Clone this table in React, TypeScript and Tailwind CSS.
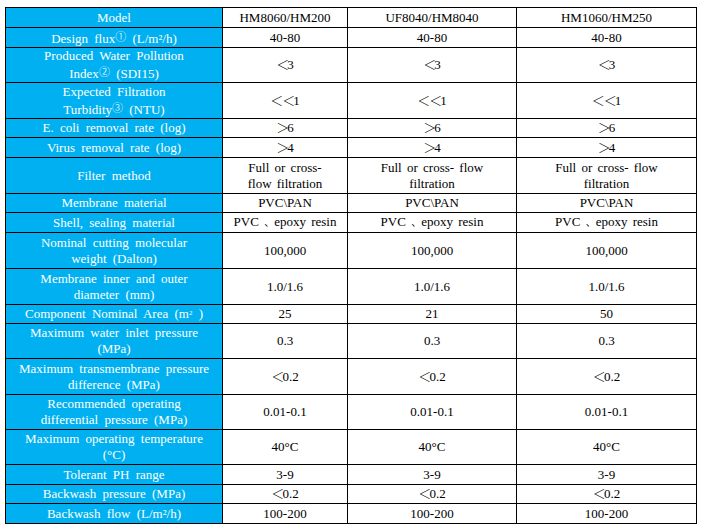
import React from 'react';

// spec table for the hollow fibre membrane modules
type Row = { label: React.ReactNode; values: React.ReactNode[]; h: string };

const Circ = ({ c }: { c: string }) => <span className="text-[11px] align-[2px] font-light">{c}</span>;

// full-width comparison sign, squeezed so it sits against the digit
const Sym = ({ c }: { c: string }) => <span className="tracking-[-2px] font-light">{c}</span>;

const same = (v: React.ReactNode) => [v, v, v];

const lt = (n: string) => (
  <>
    <Sym c="＜" />
    {n}
  </>
);
const gt = (n: string) => (
  <>
    <Sym c="＞" />
    {n}
  </>
);

const rows: Row[] = [
  {
    label: (
      <>
        Design flux<Circ c="①" /> (L/m²/h)
      </>
    ),
    values: same('40-80'),
    h: 'h-[20px]',
  },
  {
    label: (
      <>
        Produced Water Pollution
        <br />
        Index<Circ c="②" /> (SDI15)
      </>
    ),
    values: same(lt('3')),
    h: 'h-[35px]',
  },
  {
    label: (
      <>
        Expected Filtration
        <br />
        Turbidity<Circ c="③" /> (NTU)
      </>
    ),
    values: same(
      <>
        <span className="tracking-[-1px] font-light">＜</span>
        <Sym c="＜" />1
      </>
    ),
    h: 'h-[36px]',
  },
  { label: 'E. coli removal rate (log)', values: same(gt('6')), h: 'h-[19px]' },
  { label: 'Virus removal rate (log)', values: same(gt('4')), h: 'h-[20px]' },
  {
    label: 'Filter method',
    values: [
      <>
        Full or cross-
        <br />
        flow filtration
      </>,
      <>
        Full or cross- flow
        <br />
        filtration
      </>,
      <>
        Full or cross- flow
        <br />
        filtration
      </>,
    ],
    h: 'h-[36px]',
  },
  { label: 'Membrane material', values: same('PVC\\PAN'), h: 'h-[19px]' },
  {
    label: 'Shell, sealing material',
    values: same(
      <>
        PVC <span className="text-[10px]">、</span>epoxy resin
      </>
    ),
    h: 'h-[20px]',
  },
  {
    label: (
      <>
        Nominal cutting molecular
        <br />
        weight (Dalton)
      </>
    ),
    values: same('100,000'),
    h: 'h-[36px]',
  },
  {
    label: (
      <>
        Membrane inner and outer
        <br />
        diameter (mm)
      </>
    ),
    values: same('1.0/1.6'),
    h: 'h-[36px]',
  },
  {
    label: (
      <>
        Component Nominal Area (m<sup className="text-[7px]">2</sup> )
      </>
    ),
    values: ['25', '21', '50'],
    h: 'h-[19px]',
  },
  {
    label: (
      <>
        Maximum water inlet pressure
        <br />
        (MPa)
      </>
    ),
    values: same('0.3'),
    h: 'h-[35px]',
  },
  {
    label: (
      <>
        Maximum transmembrane pressure
        <br />
        difference (MPa)
      </>
    ),
    values: same(lt('0.2')),
    h: 'h-[36px]',
  },
  {
    label: (
      <>
        Recommended operating
        <br />
        differential pressure (MPa)
      </>
    ),
    values: same('0.01-0.1'),
    h: 'h-[35px]',
  },
  {
    label: (
      <>
        Maximum operating temperature
        <br />
        (°C)
      </>
    ),
    values: same('40°C'),
    h: 'h-[35px]',
  },
  { label: 'Tolerant PH range', values: same('3-9'), h: 'h-[20px]' },
  { label: 'Backwash pressure (MPa)', values: same(lt('0.2')), h: 'h-[19px]' },
  { label: 'Backwash flow (L/m²/h)', values: same('100-200'), h: 'h-[20px]' },
];

export default function App() {
  return (
    <div className="w-[704px] h-[530px] bg-white pt-[7px] pl-[5px] font-['Liberation_Serif','Noto_Sans_CJK_SC',serif] text-[13px] leading-[16px] text-black">
      <table className="w-[691px] table-fixed border-collapse">
        <colgroup>
          <col className="w-[217px]" />
          <col className="w-[125px]" />
          <col className="w-[169px]" />
          <col className="w-[180px]" />
        </colgroup>
        <tbody>
          <tr className="h-[20px]">
            <td className="border border-black bg-[#00b0f0] text-white text-center px-1 py-0">Model</td>
            <td className="border border-black text-center p-0">HM8060/HM200</td>
            <td className="border border-black text-center p-0">UF8040/HM8040</td>
            <td className="border border-black text-center p-0">HM1060/HM250</td>
          </tr>
          {rows.map((r, i) => (
            <tr key={i} className={r.h}>
              <td className="border border-black bg-[#00b0f0] text-white text-center px-1 py-0 [word-spacing:3px]">
                {r.label}
              </td>
              {r.values.map((v, j) => (
                <td key={j} className="border border-black text-center p-0 [word-spacing:2px]">
                  {v}
                </td>
              ))}
            </tr>
          ))}
        </tbody>
      </table>
    </div>
  );
}
